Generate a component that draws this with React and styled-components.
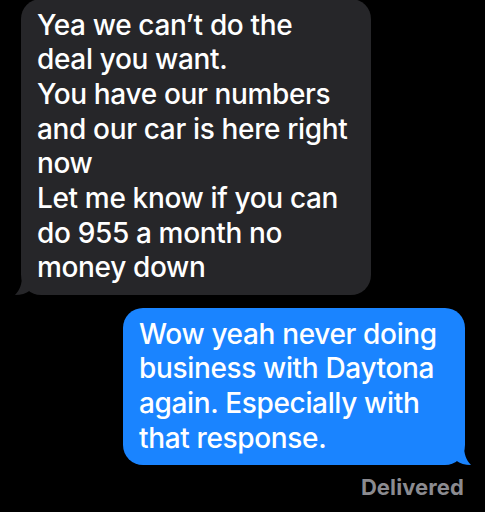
import React from 'react';
import styled, { createGlobalStyle } from 'styled-components';

const GlobalStyle = createGlobalStyle`
    html, body {
        margin: 0;
        padding: 0;
        background: #000;
    }
    body {
        font-family: Inter, "Noto Sans", "Liberation Sans", sans-serif;
        -webkit-font-smoothing: antialiased;
    }
`;

const Thread = styled.div`
    width: 485px;
    height: 512px;
    overflow: hidden;
    display: flex;
    flex-direction: column;
    background: #000;
`;

const Row = styled.div`
    display: flex;
    justify-content: ${props => (props.$mine ? 'flex-end' : 'flex-start')};
    padding: ${props => (props.$mine ? '0 20px 0 0' : '0 0 0 21px')};
    margin-top: ${props => props.$top || 0}px;
`;

const Bubble = styled.div`
    position: relative;
    width: ${props => props.$width}px;
    box-sizing: border-box;
    padding: 8.5px 16px 10px 16px;
    border-radius: 20px;
    background: ${props => (props.$mine ? '#1a84ff' : '#262629')};
    color: #fff;
    font-size: 28px;
    font-weight: 500;
    line-height: 34.7px;
    letter-spacing: -0.35px;
    white-space: pre-line;
`;

const Tail = styled.svg`
    position: absolute;
    bottom: 0;
    width: 20px;
    height: 20px;
    ${props => (props.$mine ? 'right: -6px; transform: scaleX(-1);' : 'left: -6px;')}
`;

const Status = styled.div`
    display: flex;
    justify-content: flex-end;
    padding-right: 21px;
    margin-top: 9px;
    font-size: 22px;
    font-weight: 700;
    color: #8b8b90;
    letter-spacing: 0.1px;
`;

const BubbleTail = ({ mine, color }) => (
    <Tail $mine={mine} viewBox="0 0 20 20">
        <path d="M7 0 C7 9 5 15 0 20 C6 20 11 18.5 15 15.5 L20 15.5 L20 0 Z" fill={color} />
    </Tail>
);

const App = () => (
    <Thread>
        <GlobalStyle />
        <Row $top={-1}>
            <Bubble $width={350}>
                {'Yea we can\u2019t do the\ndeal you want.\nYou have our numbers\nand our car is here right\nnow\nLet me know if you can\ndo 955 a month no\nmoney down'}
                <BubbleTail color="#262629" />
            </Bubble>
        </Row>
        <Row $mine $top={13}>
            <Bubble $mine $width={342}>
                {'Wow yeah never doing\nbusiness with Daytona\nagain. Especially with\nthat response.'}
                <BubbleTail mine color="#1a84ff" />
            </Bubble>
        </Row>
        <Status>Delivered</Status>
    </Thread>
);

export default App;
